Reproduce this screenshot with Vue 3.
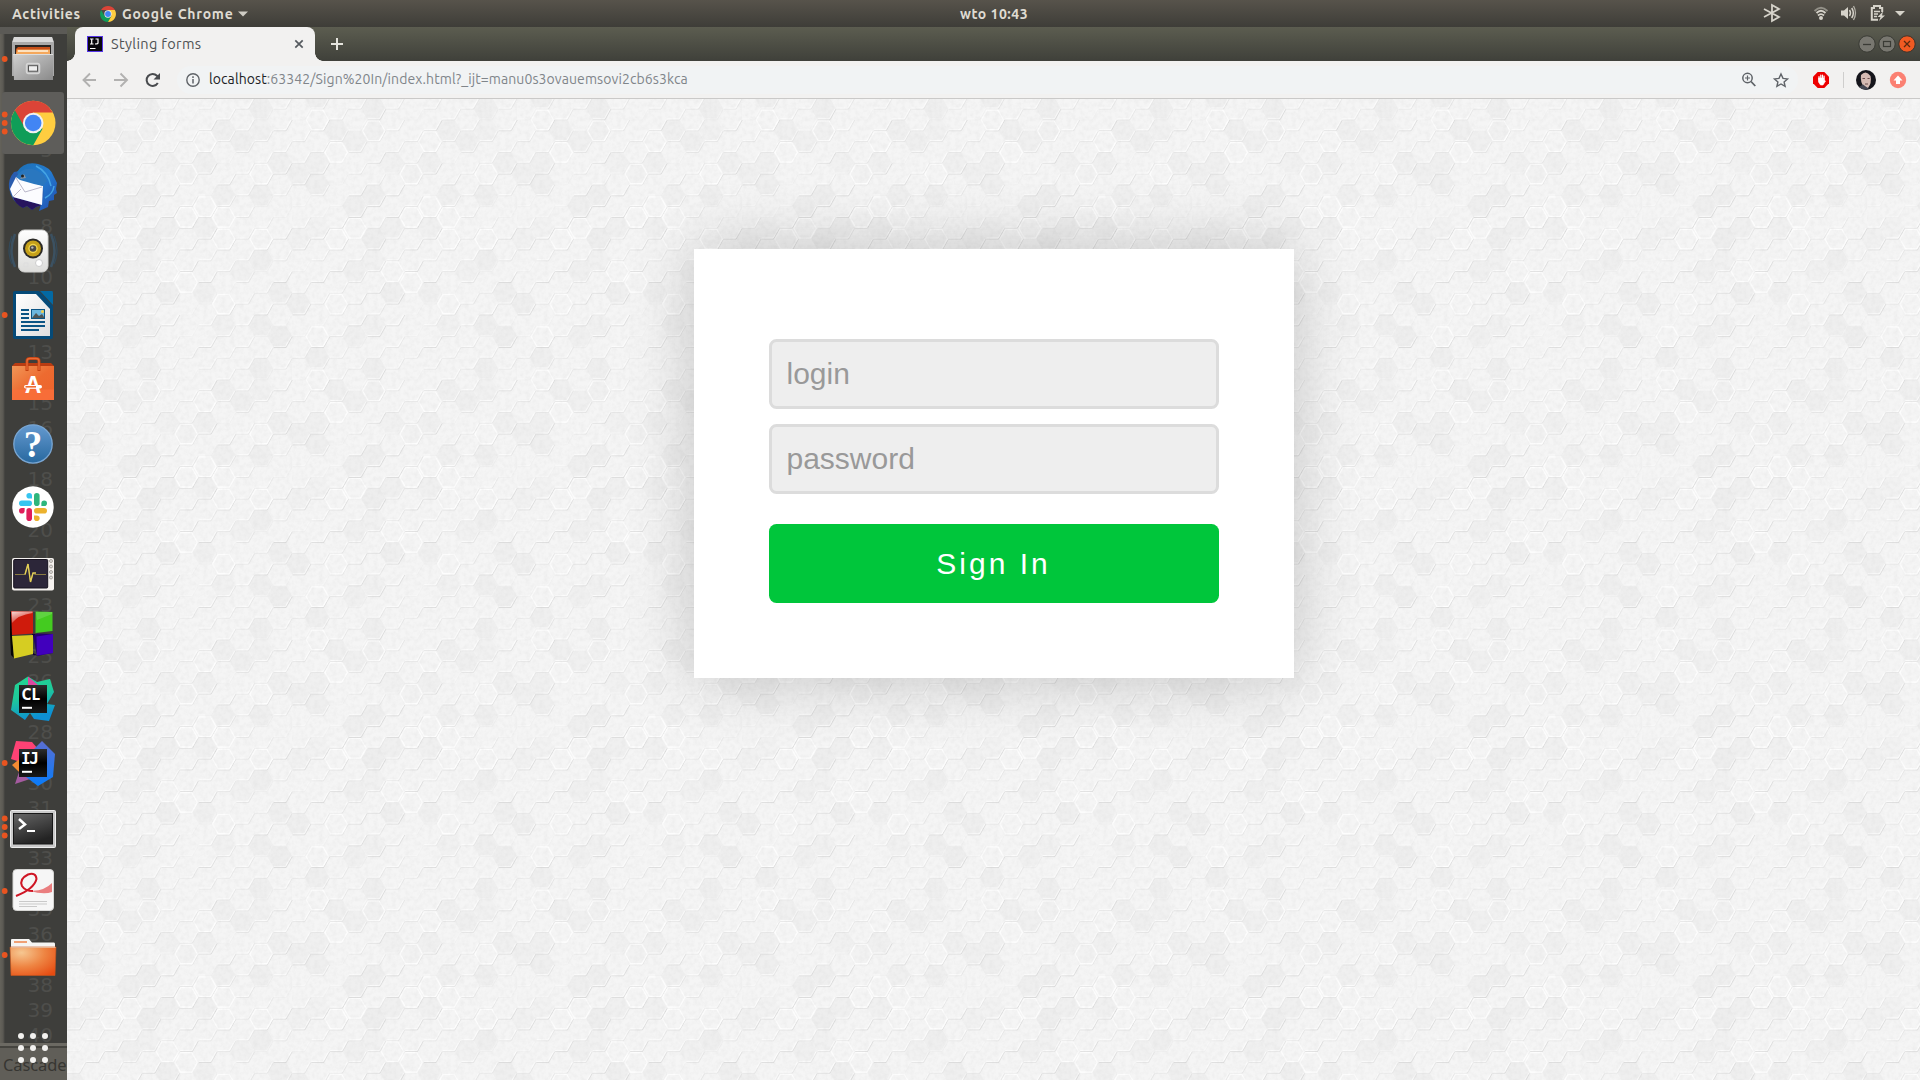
<script setup>
const COL = 18.75
const ROW = 65 / 3
const dark = {
  '0,3': 0.03, '0,6': 0.025, '0,9': 0.035, '1,2': 0.03, '1,3': 0.04, '1,5': 0.02, '1,11': 0.035,
  '2,1': 0.03, '3,1': 0.03, '3,4': 0.035, '3,7': 0.03, '3,10': 0.03, '4,0': 0.035, '4,1': 0.025,
  '4,4': 0.035, '4,6': 0.045, '4,7': 0.025, '4,10': 0.025, '5,2': 0.025, '5,5': 0.03, '5,8': 0.035,
  '6,3': 0.02, '7,2': 0.03, '7,5': 0.03, '7,8': 0.03, '8,1': 0.03, '8,4': 0.03, '8,10': 0.025,
  '9,1': 0.035, '9,7': 0.025, '10,0': 0.04, '10,1': 0.025, '10,4': 0.035, '10,7': 0.035,
  '10,10': 0.035, '11,2': 0.03, '11,8': 0.035, '11,10': 0.045,
}
const ringed = ['1,0', '1,10', '2,2', '2,6', '4,1', '6,3', '6,5', '7,1', '7,4', '8,5', '10,3', '10,6',
  '5,7', '6,8', '8,9', '2,9', '3,5', '8,6']

const cells = []
for (let c = -1; c <= 12; c++) {
  for (let r = -1; r <= 12; r++) {
    const i = (c + 12) % 12
    const k = (r + 12) % 12
    const x = 6.7 + c * COL
    const y = (i % 2 ? 21 : 10.1) + r * ROW
    const key = `${i},${k}`
    const p = (dx, dy) => `${(x + dx).toFixed(1)} ${(y + dy).toFixed(1)}`
    const seed = (i * 7 + k * 13 + i * k * 3) % 10
    cells.push({
      id: `${c}:${r}`,
      hex: `M${p(-12.5, 0)}L${p(-6.25, -10.8)}L${p(6.25, -10.8)}L${p(12.5, 0)}L${p(6.25, 10.8)}L${p(-6.25, 10.8)}Z`,
      ring: `M${p(-11.2, 0)}L${p(-5.6, -9.8)}L${p(5.6, -9.8)}L${p(11.2, 0)}L${p(5.6, 9.8)}L${p(-5.6, 9.8)}Z`,
      edge: `M${p(-6, 10.8)}L${p(6.25, 10.8)}L${p(12.3, 0)}`,
      light: `M${p(-6, 9.7)}L${p(5.6, 9.7)}L${p(11, 0)}`,
      shade: (dark[key] || 0) * 0.62,
      ringed: ringed.includes(key),
      edgeOpacity: seed < 3 ? 0.015 : seed < 7 ? 0.05 : 0.085,
      lightOpacity: seed < 3 ? 0.25 : 0.7,
    })
  }
}

// Editor line numbers that show through the dock between the launchers
const visible = [3, 5, 8, 10, 13, 15, 16, 18, 20, 21, 23, 25, 26, 28, 30, 31, 33, 35, 36, 38, 39, 40]
const lineNumbers = Array.from({ length: 38 }, (_, n) => n + 3)
const dock = [
  { name: 'files', dots: 1 }, { name: 'chrome', dots: 3, active: true }, { name: 'mail', dots: 0 },
  { name: 'sound', dots: 0 }, { name: 'writer', dots: 1 }, { name: 'software', dots: 0 },
  { name: 'help', dots: 0 }, { name: 'slack', dots: 0 }, { name: 'monitor', dots: 0 },
  { name: 'blocks', dots: 0 }, { name: 'clion', dots: 0 }, { name: 'idea', dots: 1 },
  { name: 'terminal', dots: 3 }, { name: 'reader', dots: 1 }, { name: 'folder', dots: 1 },
]
const dotRows = { 0: [], 1: [32], 3: [23.5, 32, 40.5] }
</script>

<template>
  <div class="desktop">
    <header class="topbar">
      <div class="top-left">
        <span class="activities">Activities</span>
        <svg class="mini-chrome" width="16" height="16" viewBox="-22 -22 44 44">
          <path d="M-19 -11A22 22 0 0 1 19 -11H0Z" fill="#db4437" /><path d="M-19 -11A22 22 0 0 0 0 22L9.5 5.5L-9.5 5.5Z" fill="#0f9d58" /><path d="M19 -11A22 22 0 0 1 0 22L9.5 5.5L0 -11Z" fill="#ffcd40" />
          <circle r="10" fill="#f1f1f1" /><circle r="8" fill="#4285f4" />
        </svg>
        <span class="appname">Google Chrome</span>
        <svg class="caret" width="10" height="6"><path d="M0 .5H10L5 5.5Z" fill="#cfccc4" /></svg>
      </div>
      <div class="clock">wto 10:43</div>
      <svg class="tray" width="160" height="27" viewBox="1760 0 160 27" fill="none" stroke="#d6d3ca">
        <path d="M1764 9L1779 17L1772 21V5L1779 9L1764 17" stroke-width="1.8" />
        <g stroke-width="1.8"><path d="M1814.5 11Q1821 4.500 1827.500 11" opacity=".5" /><path d="M1816.500 13Q1821 8.600 1825.500 13" /><path d="M1818 15.500Q1821 12.800 1824 15.500" /></g>
        <circle cx="1821" cy="18" r="2" fill="#d6d3ca" stroke="none" />
        <path d="M1841 10.500H1844L1848 7V19L1844 15.500H1841Z" fill="#d6d3ca" stroke="none" />
        <path d="M1849.500 10Q1851.500 13 1849.500 16M1851.700 8Q1855 13 1851.700 18" stroke-width="1.500" /><path d="M1853.500 6Q1857.500 13 1853.500 20" stroke-width="1.300" opacity=".75" />
        <path d="M1878 19.800H1871.800V8H1874V6H1880V8H1882.200V12" stroke-width="2" />
        <path d="M1874 11.500H1880M1874 14H1878M1874 16.500H1877" stroke-width="1.300" />
        <path d="M1883 11.500L1877.500 17H1880.500L1879 21L1885 15.500H1882Z" fill="#d6d3ca" stroke="none" />
        <path d="M1895 11H1905L1900 16Z" fill="#d6d3ca" stroke="none" />
      </svg>
    </header>

    <div class="workspace">
      <aside class="dock">
        <div class="behind">
          <div class="numbers"><span v-for="n in lineNumbers" :key="n">{{ visible.includes(n) ? n : '' }}</span></div>
          <div class="status">Cascade</div>
        </div>
        <div v-for="app in dock" :key="app.name" class="slot">
          <svg width="67" height="64" viewBox="0 0 67 64">
            <rect v-if="app.active" x="2" y="1" width="62" height="62" rx="3" fill="#5e5d5a" />

            <g v-if="app.name === 'files'">
              <path d="M14 10H52L54 15V49H12V15Z" fill="#aaa" /><path d="M14 10H52L53.500 15H12.500Z" fill="#d9d9d9" />
              <rect x="15" y="18" width="36" height="10" fill="#292522" /><path d="M16 22L18 20H50V27H16Z" fill="#c75019" /><path d="M17 22.500H50V27H16Z" fill="#f5a85c" /><path d="M18 24H48" stroke="#fff4df" stroke-width="1.500" />
              <path d="M13 27H53V53H14Z" fill="url(#steel)" /><path d="M13 27.500H53" stroke="#ddd" />
              <rect x="26.500" y="36.500" width="13" height="10" rx="2" fill="#b5b5b5" stroke="#d6d6d6" stroke-width="1.500" /><rect x="28.500" y="38.700" width="9" height="5.500" fill="#eee" stroke="#555" />
            </g>

            <g v-else-if="app.name === 'chrome'" transform="translate(33.200 32)">
              <circle r="22.300" fill="#ffcd40" /><path d="M-19.200 -11.300A22.300 22.300 0 0 1 19.600 -10.500H0L-9 5Z" fill="#db4437" /><path d="M-18.300 -12.700A22.300 22.300 0 0 0 0 22.300L9.500 5.500L-8 5.500Z" fill="#0f9d58" />
              <circle r="10.300" fill="#f1f1f1" /><circle r="8.300" fill="#4285f4" />
            </g>

            <g v-else-if="app.name === 'mail'">
              <path d="M14 17Q8 24 9 33Q11 46 23 53L27 51L32 55L36 52Q53 47 56 34L52 30Q44 12 25 15Z" fill="#2a5cae" />
              <path d="M13 42Q15 49 23 53L27 51L32 55L36 52L42 50Z" fill="#27145e" />
              <path d="M17 17Q24 6 38 9Q51 12 54 22L57 28L56 34L57 38L54 40L54 45L49 46L48 52L39 56L43 43Q46 29 35 28L20 24Z" fill="url(#bird)" />
              <path d="M16 22L43 31L42 50L13 42L10 34Z" fill="#fcfcff" /><path d="M16 23L25 37L42 32M13 42L21 34" fill="none" stroke="#bbb8ca" stroke-width="1" />
              <path d="M16 22Q22 12 33 14Q44 17 47 26L43 31L34 29L20 25Z" fill="#2a77bf" /><path d="M20 24L24 19L26 23Z" fill="#8a96a3" /><circle cx="22.500" cy="21" r="1.500" fill="#222" />
              <path d="M36 11Q48 17 51 31M45 43Q53 39 54 31" fill="none" stroke="#45a4e4" stroke-width="1.500" />
            </g>

            <g v-else-if="app.name === 'sound'">
              <path d="M15 15Q8 32 15 48M51 15Q58 32 51 48" fill="none" stroke="#3c566c" stroke-width="2.500" opacity=".8" /><path d="M12 17Q6 32 12 45M54 17Q60 32 54 45" fill="none" stroke="#344a5a" stroke-width="1.300" />
              <rect x="18.500" y="11" width="29.500" height="42" rx="6" fill="url(#plastic)" stroke="#d0d0ce" />
              <circle cx="33" cy="29.500" r="10" fill="#2b2a27" /><circle cx="33" cy="29.500" r="8" fill="#c5a01a" /><circle cx="33" cy="29.500" r="4.700" fill="#f1d54a" /><circle cx="33" cy="29.500" r="3.300" fill="#4d4a42" /><circle cx="32.300" cy="28.600" r="1.200" fill="#bbb" />
              <circle cx="39" cy="44" r="3.500" fill="#fff" stroke="#ccc" /><path d="M24 44H28V48H24Z" fill="none" stroke="#ddd" />
            </g>

            <g v-else-if="app.name === 'writer'">
              <path d="M15 8H39L53 23V54Q53 56 51 56H15Q13 56 13 54V10Q13 8 15 8Z" fill="#054a78" /><path d="M40 8H52Q53 8 53 10V22Z" fill="#0369a3" />
              <path d="M16 11H36L50 26V53H16Z" fill="url(#paper)" />
              <path d="M21 27H29M21 31H29M21 35H29M21 39H45M21 43H45M21 47H39" stroke="#0b5484" stroke-width="2" />
              <rect x="31.500" y="26.500" width="13" height="9" fill="#6cb6de" stroke="#0b5484" /><path d="M32 35L36 30L39 33L42 31L44 34V35Z" fill="#4f5555" /><circle cx="42.500" cy="28.500" r="1.500" fill="#f6cf47" />
            </g>

            <g v-else-if="app.name === 'software'">
              <path d="M12 19L15 16H51L54 19Z" fill="#b93c12" /><rect x="12" y="19" width="42" height="34" fill="url(#bag)" /><rect x="12" y="42.500" width="42" height="10.500" fill="#fc713d" opacity=".7" />
              <path d="M27 24V14Q27 11.500 30 11.500H36Q39 11.500 39 14V24" fill="none" stroke="#c3410f" stroke-width="3" /><path d="M27 23V14Q27 11.500 30 11.500H36Q39 11.500 39 14V23" fill="none" stroke="#ea6b37" stroke-width="1.300" />
              <text x="33" y="46" text-anchor="middle" class="bag-letter">A</text>
              <rect x="24" y="38" width="18" height="3.500" rx="1.700" fill="#fff" /><rect x="25.500" y="39" width="10.500" height="1.600" fill="#f06b2e" />
            </g>

            <g v-else-if="app.name === 'help'">
              <circle cx="33" cy="33" r="19.200" fill="url(#helpBlue)" stroke="#7aa6d2" stroke-width="1.300" />
              <text x="33" y="45.500" text-anchor="middle" class="help-mark">?</text>
            </g>

            <g v-else-if="app.name === 'slack'">
              <circle cx="33" cy="32" r="20.700" fill="#fff" />
              <g transform="translate(33 32)" stroke-width="5.600" stroke-linecap="round">
                <path d="M-3.800 -3.800H-11.200" stroke="#36c5f0" /><path d="M3.800 -3.800V-11.200" stroke="#2eb67d" /><path d="M3.800 3.800H11.200" stroke="#ecb22e" /><path d="M-3.800 3.800V11.200" stroke="#e01e5a" />
              </g>
              <g transform="translate(33 32)">
                <path d="M-1 -8.400H-3.800A2.800 2.800 0 1 1 -1 -11.200Z" fill="#36c5f0" /><path d="M8.400 -1V-3.800A2.800 2.800 0 1 1 11.200 -1Z" fill="#2eb67d" /><path d="M1 8.400H3.800A2.800 2.800 0 1 1 1 11.200Z" fill="#ecb22e" /><path d="M-8.400 1V3.800A2.800 2.800 0 1 1 -11.200 1Z" fill="#e01e5a" />
              </g>
            </g>

            <g v-else-if="app.name === 'monitor'">
              <rect x="12" y="19" width="42" height="32.500" rx="2" fill="#f5f2ef" /><rect x="13.700" y="20.500" width="34" height="28.500" rx="1" fill="#2c2639" stroke="#17131f" />
              <path d="M15 35.500H25L28 25L30.500 43L33 34L35 35.500H46" fill="none" stroke="#8a7c43" /><path d="M25 35.500L28 25L30.500 43L33 34H36" fill="none" stroke="#e3cf57" stroke-width="1.400" />
              <g fill="#ddd" stroke="#99938c" stroke-width=".8"><circle cx="51" cy="22" r="1.500" /><circle cx="51" cy="27.500" r="1.500" /><circle cx="51" cy="33" r="1.500" /><circle cx="51" cy="38.500" r="1.500" /></g>
            </g>

            <g v-else-if="app.name === 'blocks'">
              <path d="M10 9L12 8V31L14 55L11 52L10 31Z" fill="#050505" /><path d="M32 31H36L33 34V52L38 52.500L33 50Z" fill="#120038" />
              <path d="M11 8L33 8.500V30.500L12 32Z" fill="#cf1b0c" /><path d="M11.500 8.500H32.500V10Q18 12 12 20Z" fill="url(#gloss)" />
              <path d="M35.500 8.500L52.500 9V28L35.500 30Z" fill="#44cb20" /><path d="M36 9H52V11L37 17Z" fill="#fff" opacity=".15" />
              <path d="M12 33L33 32V51L14 55.500Z" fill="#d6cd22" /><path d="M33 33L37 30.500L53 31V50L37 53Z" fill="#24006e" /><path d="M36.500 33.500L53 31V50L37 52.500Z" fill="#4100bd" />
            </g>

            <g v-else-if="app.name === 'clion'">
              <path d="M28 9.500L15 18L11 43L25 53L30 46L34 52L49 54L55 38L47 37L54 25L50 12L37 15Z" fill="url(#clGreen)" /><path d="M28 9.500L38 18H28Z" fill="#dc47a0" />
              <rect x="19" y="18" width="28" height="28" fill="url(#black)" /><text x="21.500" y="32.500" class="ide">CL</text><path d="M22 40.800H32" stroke="#fff" stroke-width="2" />
            </g>

            <g v-else-if="app.name === 'idea'">
              <path d="M11 28L16 10L32 11L38 18L30 34Z" fill="#ff4275" /><path d="M12 34L22 26L24 45L18 40Z" fill="#f58b32" /><path d="M20 38L15 53L36 46Z" fill="#a55ba0" />
              <path d="M34 18L42 10L55 23L53 46L38 55L26 46Z" fill="url(#ijBlue)" />
              <rect x="19" y="18" width="28" height="28" fill="url(#black)" /><text x="21" y="32.500" class="ide mono">IJ</text><path d="M22 40.800H32" stroke="#fff" stroke-width="2" />
            </g>

            <g v-else-if="app.name === 'terminal'">
              <rect x="10.500" y="15.500" width="45" height="37" rx="1" fill="#cacaca" stroke="#ececec" /><rect x="13.500" y="18.500" width="39" height="30.500" fill="url(#term)" stroke="#171717" />
              <path d="M19 24L25 29.500L19 34" fill="none" stroke="#fff" stroke-width="2.500" /><path d="M27 36H35" stroke="#fff" stroke-width="2" />
            </g>

            <g v-else-if="app.name === 'reader'">
              <rect x="13" y="10.500" width="40.500" height="41" rx="3.500" fill="#f6f6f6" /><rect x="13" y="10.500" width="40.500" height="41" rx="3.500" fill="none" stroke="#d5d5d3" />
              <path d="M26 31Q42 34 52 24V33Q44 36 30 32Z" fill="#e65557" opacity=".75" />
              <path d="M16 37Q34 30 36.500 20Q36 13 28 15.500Q19 20 22 27Q25 32 33 32" fill="none" stroke="#cf1625" stroke-width="2" />
              <path d="M19 42.500H47M19 45H47M19 47.500H37" stroke="#c9c9c9" />
            </g>

            <g v-else-if="app.name === 'folder'">
              <path d="M11 26V17Q11 16 12 16H29L32 19.500H54Q55 19.500 55 21V27H11Z" fill="#f5f4f2" /><path d="M14 19H27" stroke="#f0a074" stroke-width="2" />
              <path d="M10 24H56L55 52.500H11Z" fill="url(#orange)" stroke="#c9551d" stroke-width=".6" /><path d="M11 24.500H55.500" stroke="#e9b48f" />
            </g>

            <circle v-for="y in dotRows[app.dots]" :key="y" cx="4.700" :cy="y" r="2.900" fill="#e95420" />
          </svg>
        </div>
        <svg class="apps" width="67" height="64" viewBox="0 0 67 64" fill="#f2f1ef">
          <template v-for="y in [20, 32, 44]" :key="y"><circle v-for="x in [21, 33, 45]" :key="x" :cx="x" :cy="y" r="3" /></template>
        </svg>
        <svg class="defs" width="0" height="0">
          <defs>
            <linearGradient id="steel" x2="1" y2="1"><stop stop-color="#d0d0d0" /><stop offset="1" stop-color="#8a8a8a" /></linearGradient>
            <linearGradient id="bird" x2="1" y2="1"><stop stop-color="#1d6fb5" /><stop offset=".5" stop-color="#247bcf" /><stop offset="1" stop-color="#214db0" /></linearGradient>
            <linearGradient id="gloss" x2=".6" y2="1"><stop stop-color="#fff" stop-opacity=".85" /><stop offset="1" stop-color="#fff" stop-opacity=".05" /></linearGradient>
            <linearGradient id="plastic" x2="0" y2="1"><stop stop-color="#fff" /><stop offset="1" stop-color="#dcdcda" /></linearGradient>
            <linearGradient id="paper" x2="1" y2="1"><stop stop-color="#fff" /><stop offset="1" stop-color="#dedede" /></linearGradient>
            <linearGradient id="bag" x2="1" y2="1"><stop stop-color="#f29657" /><stop offset=".5" stop-color="#ed6b30" /><stop offset="1" stop-color="#ee622b" /></linearGradient>
            <linearGradient id="helpBlue" x2="0" y2="1"><stop stop-color="#659ad0" /><stop offset="1" stop-color="#27689f" /></linearGradient>
            <linearGradient id="clGreen" x2=".3" y2="1"><stop stop-color="#23d893" /><stop offset=".5" stop-color="#1fc99a" /><stop offset="1" stop-color="#0d90d4" /></linearGradient>
            <linearGradient id="ijBlue" x2="0" y2="1"><stop stop-color="#5b6dd0" /><stop offset="1" stop-color="#087cfa" /></linearGradient>
            <linearGradient id="black" x2="0" y2="1"><stop stop-color="#2d2d2d" /><stop offset=".5" stop-color="#000" /><stop offset="1" stop-color="#1a1a1a" /></linearGradient>
            <linearGradient id="term" x2=".4" y2="1"><stop stop-color="#666" /><stop offset="1" stop-color="#232323" /></linearGradient>
            <radialGradient id="orange" cx=".25" cy=".2" r="1"><stop stop-color="#f6c791" /><stop offset=".5" stop-color="#ee8543" /><stop offset="1" stop-color="#e64a10" /></radialGradient>
          </defs>
        </svg>
      </aside>

      <main class="browser">
        <div class="tabstrip">
          <div class="tab">
            <svg width="16" height="16" viewBox="0 0 16 16"><rect x=".5" y=".5" width="15" height="15" fill="#08070d" stroke="#5635e8" /><path d="M3 3H6.500M4.700 3V8M3 8H6.500M8.500 3H11V7Q11 8 8 8" fill="none" stroke="#fff" stroke-width="1.200" /><path d="M3 12.500H8.500" stroke="#fff" /></svg>
            <span class="tab-title">Styling forms</span>
            <svg class="close" width="10" height="10" viewBox="0 0 10 10"><path d="M1.300 1.300L8.700 8.700M8.700 1.300L1.300 8.700" stroke="#555a5f" stroke-width="1.700" /></svg>
          </div>
          <svg class="plus" width="12" height="12"><path d="M6 0V12M0 6H12" stroke="#e5e4de" stroke-width="2" /></svg>
          <svg class="winbtns" width="60" height="20" viewBox="0 0 60 20" fill="none">
            <circle cx="10" cy="10" r="8.200" fill="#787770" stroke="#393a34" /><path d="M6 10.500H14" stroke="#3a3b35" stroke-width="1.300" />
            <circle cx="30" cy="10" r="8.200" fill="#787770" stroke="#393a34" /><rect x="26.500" y="7.500" width="7" height="5" stroke="#3a3b35" stroke-width="1.200" />
            <circle cx="50" cy="10" r="8.200" fill="#f15a22" stroke="#3e322a" /><path d="M47 7L53 13M53 7L47 13" stroke="#5a2a10" stroke-width="1.300" />
          </svg>
        </div>

        <div class="toolbar">
          <svg class="nav" width="80" height="16" viewBox="0 0 80 16" fill="none" stroke-width="1.900">
            <path d="M14 8H1.500M8 1.500L1.500 8L8 14.500" stroke="#b2b1b0" /><path d="M32 8H45M38.500 1.500L45 8L38.500 14.500" stroke="#b2b1b0" />
            <path d="M75.800 11A6 6 0 1 1 75 3.800L76.500 5.500" stroke="#494b4e" stroke-width="2" /><path d="M78 1V7.500H71.500Z" fill="#494b4e" />
          </svg>
          <div class="omnibox">
            <svg width="14" height="14" viewBox="0 0 14 14" fill="none"><circle cx="7" cy="7" r="6.200" stroke="#5f6368" stroke-width="1.400" /><path d="M7 6V10.500M7 3.300V4.900" stroke="#5f6368" stroke-width="1.500" /></svg>
            <span class="url"><b>localhost</b>:63342/Sign%20In/index.html?_ijt=manu0s3ovauemsovi2cb6s3kca</span>
            <svg class="box-icons" width="60" height="18" viewBox="1735 70 60 18" fill="none" stroke="#5f6368">
              <circle cx="1747.500" cy="77" r="4.700" stroke-width="1.500" /><path d="M1751 80.500L1755.300 85" stroke-width="1.800" /><path d="M1745 77H1750M1747.500 74.500V79.500" stroke-width="1.200" />
              <path d="M1781 73L1783 77.400L1787.500 77.900L1784.100 80.900L1785.100 85.300L1781 83L1776.900 85.300L1777.900 80.900L1774.500 77.900L1779 77.400Z" stroke-width="1.400" />
            </svg>
          </div>
          <svg class="extras" width="110" height="24" viewBox="1810 67 110 24">
            <path d="M1817.700 71H1824.300L1829 75.700V82.300L1824.300 87H1817.700L1813 82.300V75.700Z" fill="#ed0000" />
            <path d="M1818.500 77V81L1820.500 84H1823L1825.500 80L1824.800 79.500L1823.800 80V77Z" fill="#fff" stroke="#fff" stroke-width=".6" /><path d="M1819 79V75.500M1820.800 79V74M1822.500 79V74M1824.100 80V75.200" stroke="#fff" stroke-width="1.200" stroke-linecap="round" />
            <path d="M1843.500 71V87" stroke="#cfcecd" />
            <circle cx="1866" cy="79" r="10" fill="#15151b" /><path d="M1861 74Q1866 68.500 1870.500 75Q1872 82 1868 87L1864 86Q1860 81 1861 74Z" fill="#d5bab3" /><path d="M1862.500 77.500H1865M1867.500 77.500H1869.700M1865 83H1868" stroke="#6b4e4c" /><path d="M1859 86L1863 83.500L1867 86.500L1869 88Q1864 90 1859 86Z" fill="#444652" />
            <circle cx="1898" cy="79" r="8.200" fill="#fb8072" /><path d="M1898 74.500L1902.500 79.500H1900V83H1896V79.500H1893.500Z" fill="#fff" />
          </svg>
        </div>

        <section class="page">
          <svg class="hexes" width="1853" height="981">
            <defs>
              <filter id="soft" x="0" y="0" width="100%" height="100%"><feGaussianBlur stdDeviation=".4" /></filter>
              <filter id="grain" x="0" y="0" width="100%" height="100%">
                <feTurbulence type="fractalNoise" baseFrequency=".22" numOctaves="3" seed="4" />
                <feColorMatrix values="0 0 0 0 .55  0 0 0 0 .55  0 0 0 0 .55  .3 0 0 0 -.11" />
              </filter>
              <pattern id="honeycomb" width="225" height="260" patternUnits="userSpaceOnUse">
                <rect width="225" height="260" fill="#f5f5f5" />
                <g filter="url(#soft)">
                  <path v-for="h in cells" :key="'f' + h.id" :d="h.hex" fill="#000" :fill-opacity="h.shade" />
                  <g v-for="h in cells" :key="h.id" fill="none">
                    <path :d="h.edge" stroke="#000" :stroke-opacity="h.edgeOpacity" stroke-width="1" />
                    <path :d="h.light" stroke="#fff" :stroke-opacity="h.lightOpacity" stroke-width="1" />
                    <path v-if="h.ringed" :d="h.ring" stroke="#fff" stroke-opacity=".8" stroke-width="1.200" />
                  </g>
                </g>
                <rect width="225" height="260" filter="url(#grain)" />
              </pattern>
            </defs>
            <rect width="1853" height="981" fill="url(#honeycomb)" />
          </svg>
          <form class="card">
            <div class="field">login</div>
            <div class="field">password</div>
            <button type="button" class="submit">Sign In</button>
          </form>
        </section>
      </main>
    </div>
  </div>
</template>

<style>
body { margin: 0; overflow: hidden; }
</style>

<style scoped>
* { box-sizing: border-box; }
svg { display: block; flex: none; }
.desktop { width: 1920px; height: 1080px; display: flex; flex-direction: column; overflow: hidden; font-family: Ubuntu, "Noto Sans", sans-serif; }
.topbar { height: 27px; flex: none; display: grid; grid-template-columns: 1fr auto 1fr; align-items: center; background: linear-gradient(#57534b, #3e3d38); color: #dfdbd2; font-size: 14px; font-weight: 600; line-height: 26px; }
.top-left { display: flex; align-items: center; padding-left: 12px; }
.activities { width: 88px; letter-spacing: .65px; }
.appname { margin-left: 6px; width: 116px; white-space: nowrap; letter-spacing: .75px; }
.clock { width: 68px; margin-left: 68px; white-space: nowrap; letter-spacing: .5px; }
.tray { justify-self: end; }
.workspace { flex: 1; display: flex; min-height: 0; }
.dock { position: relative; width: 67px; flex: none; display: flex; flex-direction: column; background: #3e3e3b; overflow: hidden; }
.behind { position: absolute; inset: 0; display: flex; flex-direction: column; border-top: 7px solid #5b5a56; background: linear-gradient(90deg, #65635b 0, #5b5953 3px, #3e3e3b 5px); }
.numbers { flex: none; height: 1009px; padding-top: 53.500px; display: flex; flex-direction: column; align-items: flex-end; padding-right: 14px; color: #4e4e4b; font: 20px "DejaVu Sans", sans-serif; }
.numbers span { flex: none; height: 25.300px; line-height: 24px; }
.numbers span:last-child { height: 20px; }
.status { flex: 1; border-top: 3px solid #6c6a63; box-shadow: inset 0 2px #45443f; background: #605e58; color: #373632; font: 16.500px/24px "Noto Sans", sans-serif; letter-spacing: -.1px; padding: 7px 0 0 3px; white-space: nowrap; }
.slot { position: relative; height: 64px; flex: none; }
.apps { position: relative; margin-top: 29px; }
.defs { position: absolute; }
.bag-letter { font: bold 23px "Liberation Sans", sans-serif; fill: #fff; }
.help-mark { font: bold 37px "Liberation Serif", serif; fill: #fff; }
.ide { font: bold 15.500px "Noto Sans", sans-serif; fill: #fff; }
.ide.mono { font: bold 16px "DejaVu Sans Mono", monospace; letter-spacing: -1.500px; }
.browser { flex: 1; min-width: 0; display: flex; flex-direction: column; }
.tabstrip { height: 34px; flex: none; display: flex; align-items: center; background: linear-gradient(#5c5d50, #3f403a); padding-left: 8px; padding-right: 3px; }
.tab { position: relative; width: 240px; height: 34px; background: #f2f1f0; border-radius: 8px 8px 0 0; display: flex; align-items: center; padding: 0 11px 0 12px; color: #4f5154; }
.tab::before, .tab::after { content: ""; position: absolute; bottom: 0; width: 8px; height: 8px; }
.tab::before { left: -8px; background: radial-gradient(circle at 0 0, transparent 7.500px, #f2f1f0 8px); }
.tab::after { right: -8px; background: radial-gradient(circle at 100% 0, transparent 7.500px, #f2f1f0 8px); }
.tab-title { margin-left: 8px; font-size: 14.500px; letter-spacing: .35px; line-height: 20px; }
.close { margin-left: auto; }
.plus { margin-left: 16px; }
.winbtns { margin-left: auto; }
.toolbar { height: 38px; flex: none; display: flex; align-items: center; background: #f2f1f0; border-bottom: 1px solid #cac9c8; padding-left: 15px; }
.nav { margin-right: 15px; }
.omnibox { width: 1621px; height: 28px; border-radius: 14px; background: #f1f3f4; display: flex; align-items: center; padding: 0 3px 0 9px; margin-right: 12px; }
.url { margin-left: 9px; padding-bottom: 2px; font-size: 14px; letter-spacing: .095px; color: #80858a; white-space: nowrap; }
.url b { font-weight: 400; color: #202124; }
.box-icons { margin-left: auto; }
.page { position: relative; flex: 1; min-height: 0; display: flex; justify-content: center; align-items: flex-start; padding-top: 150px; background: #f3f3f3; overflow: hidden; }
.hexes { position: absolute; inset: 0; }
.card { position: relative; width: 600px; height: 429px; background: #fff; padding: 90px 75px 75px; display: flex; flex-direction: column; box-shadow: 0 0 62px rgba(0, 0, 0, .2); font-family: "Liberation Sans", Arial, sans-serif; }
.field { height: 70px; flex: none; margin-bottom: 15px; border: 3px solid #dcdcdc; border-radius: 7.500px; background: #eee; padding: 0 15px; font-size: 30px; line-height: 64px; color: #999; }
.submit { margin-top: 15px; height: 79px; flex: none; border: 0; border-radius: 7.500px; background: #00c63b; color: #fff; font: 30px "Liberation Sans", Arial, sans-serif; letter-spacing: 3px; padding: 0; }
</style>
